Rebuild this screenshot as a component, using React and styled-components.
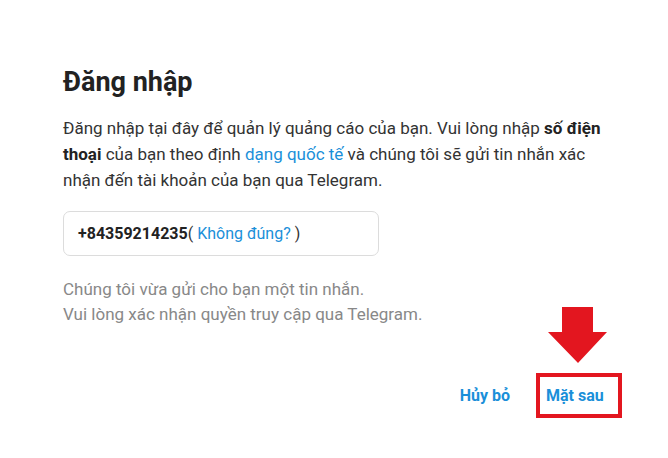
import React from 'react';
import styled, { createGlobalStyle } from 'styled-components';

const GlobalStyle = createGlobalStyle`
  html, body {
    margin: 0;
    padding: 0;
    background: #ffffff;
  }
  body {
    font-family: Roboto, "Liberation Sans", Arial, sans-serif;
    -webkit-font-smoothing: antialiased;
  }
`;

const Dialog = styled.div`
  position: relative;
  width: 668px;
  height: 458px;
  box-sizing: border-box;
  padding: 66px 0 0 63px;
  display: flex;
  flex-direction: column;
  color: #333;
`;

const Title = styled.h1`
  margin: 0;
  font-size: 27px;
  font-weight: 700;
  color: #222;
  line-height: 32px;
`;

const Intro = styled.p`
  margin: 17px 0 0;
  width: 548px;
  font-size: 17px;
  line-height: 26px;
  color: #333;

  b {
    font-weight: 700;
    color: #222;
  }
`;

const Link = styled.a`
  color: #1a8fd9;
  text-decoration: none;
  cursor: pointer;
`;

const PhoneBox = styled.div`
  margin-top: 18px;
  width: 316px;
  height: 45px;
  box-sizing: border-box;
  border: 1px solid #dcdcdc;
  border-radius: 7px;
  display: flex;
  align-items: center;
  padding: 0 14px;
  font-size: 16px;
  color: #333;

  b {
    font-weight: 700;
    color: #222;
  }
`;

const Note = styled.p`
  margin: 21px 0 0;
  font-size: 17px;
  line-height: 25px;
  color: #888;
`;

const Footer = styled.div`
  margin-top: 46px;
  margin-right: 46px;
  display: flex;
  justify-content: flex-end;
  align-items: center;
  gap: 16px;
`;

const Button = styled.button`
  background: none;
  border: ${p => (p.$marked ? '4px solid #e3161f' : '4px solid transparent')};
  padding: 8px 6px;
  font-family: inherit;
  font-size: 16px;
  font-weight: 700;
  color: #1a8fd9;
  cursor: pointer;
  line-height: 20px;
  width: ${p => (p.$marked ? '86px' : 'auto')};
  height: 45px;
  text-align: left;
`;

const Arrow = styled.svg`
  position: absolute;
  left: 548px;
  top: 307px;
`;

export default function App() {
  return (
    <>
      <GlobalStyle />
      <Dialog>
        <Title>Đăng nhập</Title>
        <Intro>
          Đăng nhập tại đây để quản lý quảng cáo của bạn. Vui lòng nhập <b>số điện thoại</b> của bạn theo định{' '}
          <Link>dạng quốc tế</Link> và chúng tôi sẽ gửi tin nhắn xác nhận đến tài khoản của bạn qua Telegram.
        </Intro>
        <PhoneBox>
          <b>+84359214235</b>(&nbsp;<Link>Không đúng?</Link>&nbsp;)
        </PhoneBox>
        <Note>
          Chúng tôi vừa gửi cho bạn một tin nhắn.
          <br />
          Vui lòng xác nhận quyền truy cập qua Telegram.
        </Note>
        <Footer>
          <Button>Hủy bỏ</Button>
          <Button $marked>Mặt sau</Button>
        </Footer>
        <Arrow width="60" height="57" viewBox="0 0 60 57">
          <polygon points="14,0 45,0 45,25 59,25 30,56 0,25 14,25" fill="#e3161f" />
        </Arrow>
      </Dialog>
    </>
  );
}
